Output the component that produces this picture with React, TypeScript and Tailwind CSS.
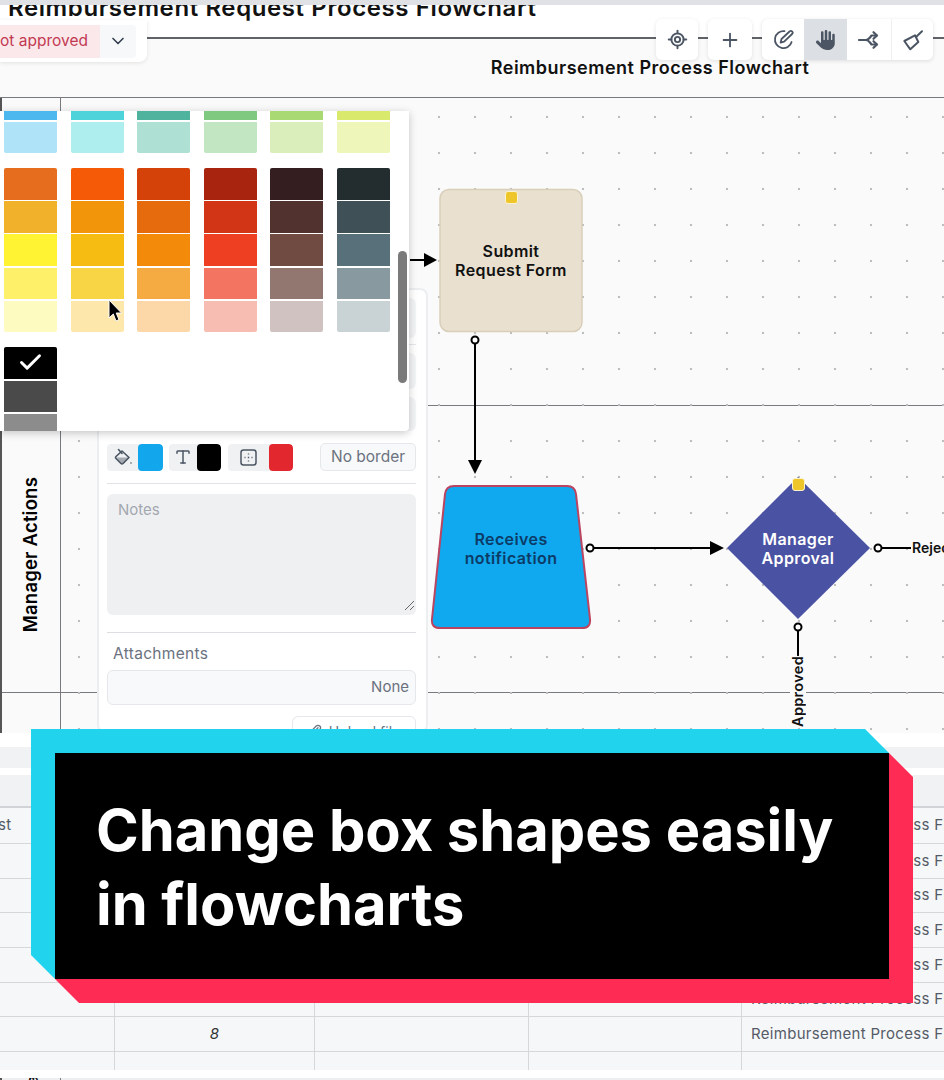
import { Check, ChevronDown, LocateFixed, Paperclip, Plus, Type } from "lucide-react";
import { FaHand } from "react-icons/fa6";

const paletteTop = [
  ["#4cb8ee", "#aee3f8"],
  ["#4fd3db", "#aeeeee"],
  ["#4fb39e", "#aee0d4"],
  ["#7fca80", "#c3e6c2"],
  ["#a9d973", "#d9eebb"],
  ["#d9e96c", "#eef6b9"],
];
const paletteMid = [
  ["#e56d1d", "#f2b12b", "#fff333", "#fff069", "#fefbc0"],
  ["#f55a06", "#f3950b", "#f7bc12", "#f8d545", "#fde7ab"],
  ["#d4420a", "#e66b0c", "#f48a0a", "#f6aa42", "#fcd8a8"],
  ["#a8240f", "#d23416", "#ef3f23", "#f37460", "#f7bdb3"],
  ["#341e1f", "#51322e", "#6f4b42", "#927670", "#d0c2c1"],
  ["#232c2f", "#3f5157", "#587079", "#88999f", "#c9d3d5"],
];

function Swatches({ colors, lastClip }: { colors: string[]; lastClip?: number }) {
  return (
    <div className="flex w-[53px] flex-col gap-[1.5px] overflow-hidden rounded-[2px]">
      {colors.map((c, i) => (
        <div key={c} style={{ backgroundColor: c, height: i === colors.length - 1 && lastClip ? lastClip : 31.7 }} />
      ))}
    </div>
  );
}

function Toolbar() {
  const btn = "flex h-[41px] w-[42px] items-center justify-center text-[#4b5563]";
  return (
    <div className="absolute left-[656px] top-[19px] flex gap-[10px]">
      <div className={`${btn} rounded-[6px] bg-white shadow-[0_1px_4px_rgba(0,0,0,0.1)]`}>
        <LocateFixed size={21} strokeWidth={2.2} />
      </div>
      <div className={`${btn} w-[44px] rounded-[6px] bg-white shadow-[0_1px_4px_rgba(0,0,0,0.1)]`}>
        <Plus size={22} strokeWidth={2} />
      </div>
      <div className="flex overflow-hidden rounded-[6px] bg-white shadow-[0_1px_4px_rgba(0,0,0,0.12)]">
        <div className={btn}>
          <svg width="21" height="21" viewBox="0 0 21 21" fill="none" stroke="currentColor" strokeWidth="1.8" strokeLinecap="round" strokeLinejoin="round">
            <path d="M11.5 2.2A8.5 8.5 0 1 0 18.6 13" />
            <path d="M7.6 13.6l.9-3.6 8-7.5a1.8 1.8 0 0 1 2.6 2.5l-8 7.6z" />
          </svg>
        </div>
        <div className={`${btn} w-[43px] bg-[#dcdfe3]`}>
          <FaHand size={20} />
        </div>
        <div className={btn}>
          <svg width="22" height="22" viewBox="0 0 22 22" fill="none" stroke="currentColor" strokeWidth="2.2" strokeLinecap="round" strokeLinejoin="round">
            <path d="M2 11H9Q11 11 13 8.5L14.5 6.5H19.5" />
            <path d="M9 11Q11 11 13 13.5L14.5 15.5H19.5" />
            <path d="M16.5 3.2L20 6.5L16.5 9.8" />
            <path d="M16.5 12.2L20 15.5L16.5 18.8" />
          </svg>
        </div>
        <div className={`${btn} ml-[2px] border-l border-[#eef0f2]`}>
          <svg width="22" height="22" viewBox="0 0 22 22" fill="none" stroke="currentColor" strokeWidth="2" strokeLinecap="round" strokeLinejoin="round">
            <path d="M14 8L20 2.3" />
            <path d="M2.3 12L13 6.3L16.3 13L8.3 20.3Z" />
          </svg>
        </div>
      </div>
    </div>
  );
}

function Lane({ height, label }: { height: string; label?: string }) {
  return (
    <div className={`flex ${height} border-b border-[#777b80]`}>
      <div className="flex w-[59px] shrink-0 items-center justify-center border-r border-[#777b80]">
        {label && (
          <span className="mt-[12px] rotate-180 text-[18.5px] font-semibold tracking-[0.2px] text-black [writing-mode:vertical-rl]">{label}</span>
        )}
      </div>
      <div className="flex-1" />
    </div>
  );
}

function Connectors() {
  return (
    <svg className="pointer-events-none absolute left-0 top-0" width="944" height="733" fill="none">
      <rect x="440" y="189.5" width="142" height="142" rx="9" fill="#e9e0d0" stroke="#d9cfb9" strokeWidth="1.5" />
      <path d="M454 486H567Q575 486 576 494L590 619Q591 628 582 628H440Q431 628 432 619L445 494Q446 486 454 486Z" fill="#10a8ee" stroke="#bb4460" strokeWidth="2" />
      <polygon points="798,477 870,548 798,619 727,548" fill="#4a52a3" />
      <g stroke="#000" strokeWidth="2">
        <path d="M410 260H425" />
        <path d="M475 344V461" />
        <path d="M594 548H712" />
        <path d="M882 548H911" />
        <path d="M798 631V656" />
      </g>
      <g fill="#000">
        <path d="M424 253L437 260L424 267Z" />
        <path d="M468 460L482 460L475 474Z" />
        <path d="M710 541L724 548L710 555Z" />
      </g>
      <g stroke="#000" strokeWidth="2" fill="#fff">
        <circle cx="475" cy="340" r="3.5" />
        <circle cx="590" cy="548" r="3.5" />
        <circle cx="878" cy="548" r="3.5" />
        <circle cx="798" cy="627" r="3.5" />
      </g>
    </svg>
  );
}

function Badge({ className }: { className: string }) {
  return <div className={`absolute h-[13px] w-[13px] rounded-[3px] border border-[#fbf3cf] bg-[#eec62a] ${className}`} />;
}

function Panel() {
  return (
    <div className="absolute left-[97px] top-[288px] flex h-[445px] w-[331px] flex-col rounded-[8px] border-2 border-[#eceef0] bg-white pl-[8px] pr-[10px] pt-[8px]">
      <div className="h-[40px] shrink-0 rounded-[6px] bg-[#f3f4f6]" />
      <div className="mt-[6px] border-t border-[#e5e7eb]" />
      <div className="mt-[8px] h-[36px] shrink-0 rounded-[6px] bg-[#f3f4f6]" />
      <div className="mt-[8px] h-[34px] shrink-0 rounded-[6px] bg-[#f3f4f6]" />
      <div className="mt-[12px] flex h-[28px] shrink-0 items-center">
        <div className="flex h-[27px] w-[56px] items-center overflow-hidden rounded-[4px] bg-[#f0f1f3]">
          <div className="flex w-[31px] justify-center text-[#4b5563]">
            <svg width="18" height="18" viewBox="0 0 18 18" fill="none" stroke="currentColor" strokeWidth="1.6" strokeLinejoin="round" strokeLinecap="round">
              <path d="M8 3L15 9.5L9 15.5Q8 16.5 7 15.5L2 10.5Q1 9.5 2 8.5Z" />
              <path d="M2.5 9.5H14.6L9 15.5Q8 16.5 7 15.5Z" fill="currentColor" opacity="0.45" stroke="none" />
              <path d="M4.5 1.5L8 5.5" />
              <circle cx="17" cy="15" r="0.8" fill="currentColor" stroke="none" />
            </svg>
          </div>
          <div className="h-full w-[25px] rounded-[4px] bg-[#12a6ec]" />
        </div>
        <div className="ml-[6px] flex h-[27px] w-[52px] items-center overflow-hidden rounded-[4px] bg-[#f0f1f3]">
          <div className="flex w-[28px] justify-center text-[#4b5563]">
            <Type size={18} strokeWidth={2} />
          </div>
          <div className="h-full w-[24px] rounded-[4px] bg-black" />
        </div>
        <div className="ml-[7px] flex h-[27px] w-[65px] items-center overflow-hidden rounded-[4px] bg-[#f0f1f3]">
          <div className="flex w-[41px] justify-center text-[#4b5563]">
            <svg width="17" height="17" viewBox="0 0 17 17" fill="none" stroke="currentColor">
              <rect x="1" y="1" width="15" height="15" rx="2.5" strokeWidth="1.5" />
              <path d="M8.5 4.5v1M8.5 7.8v1.4M8.5 11.5v1M4.5 8.5h1M11.5 8.5h1" strokeWidth="1.4" />
            </svg>
          </div>
          <div className="h-full w-[24px] rounded-[4px] bg-[#e3272f]" />
        </div>
        <div className="ml-auto flex h-[28px] w-[96px] items-center justify-center rounded-[5px] border border-[#e5e7eb] bg-[#f8f9fa] text-[15.5px] text-[#6b7280]">
          No border
        </div>
      </div>
      <div className="mt-[12px] border-t border-[#e1e3e6]" />
      <div className="relative mt-[10px] h-[121px] shrink-0 rounded-[6px] bg-[#eff0f2] px-[11px] py-[5px] text-[15px] text-[#a3a8b0]">
        Notes
        <svg className="absolute bottom-[4px] right-[1px]" width="11" height="11" viewBox="0 0 11 11" stroke="#666" strokeWidth="1">
          <path d="M1 10L10 1M6 10L10 6" />
        </svg>
      </div>
      <div className="mt-[17px] border-t border-[#dcdee1]" />
      <div className="mt-[11px] pl-[6px] text-[15.5px] leading-[20px] tracking-[0.3px] text-[#6b7280]">Attachments</div>
      <div className="mt-[6px] flex h-[35px] shrink-0 items-center justify-end rounded-[6px] border border-[#e5e7eb] bg-[#f8f9fa] pr-[6px] text-[15px] text-[#6b7280]">
        None
      </div>
      <div className="mt-[11px] flex h-[30px] w-[124px] shrink-0 items-center justify-center gap-[6px] self-end rounded-[6px] border border-[#e5e7eb] text-[14px] text-[#6b7280]">
        <Paperclip size={15} /> Upload file
      </div>
    </div>
  );
}

function Palette() {
  return (
    <div className="absolute left-0 top-[111px] h-[320px] w-[409px] overflow-hidden rounded-br-[4px] bg-white pl-[4px] shadow-[0_2px_8px_rgba(0,0,0,0.22)]">
      <div className="flex gap-[13.6px]">
        {paletteTop.map((c) => (
          <div key={c[0]} className="flex w-[53px] flex-col gap-[2px] overflow-hidden rounded-b-[2px]">
            <div className="h-[9px]" style={{ backgroundColor: c[0] }} />
            <div className="h-[31px]" style={{ backgroundColor: c[1] }} />
          </div>
        ))}
      </div>
      <div className="mt-[15px] flex gap-[13.6px]">
        {paletteMid.map((c) => (
          <Swatches key={c[0]} colors={c} />
        ))}
      </div>
      <div className="relative mt-[15px]">
        <Swatches colors={["#000000", "#4a4a4a", "#8c8c8c"]} lastClip={18} />
        <Check size={27} strokeWidth={2.6} className="absolute left-[13px] top-[2px] text-white" />
      </div>
      <div className="absolute left-[398px] top-[140px] h-[132px] w-[9px] rounded-full bg-[#7a7a7a]" />
      <svg className="absolute left-[107px] top-[188px]" width="15" height="24" viewBox="0 0 15 24">
        <path d="M2 1V19L6.3 15L9 22L12 20.6L9.2 14H14.5Z" fill="#000" stroke="#fff" strokeWidth="1" />
      </svg>
    </div>
  );
}

function TableRow({ left, num, right, h = "h-[34.7px]" }: { left?: string; num?: string; right?: string; h?: string }) {
  return (
    <div className={`flex ${h} shrink-0 border-b border-[#d5d7db] text-[15px] tracking-[0.3px] text-[#555b66]`}>
      <div className="flex w-[115px] items-center overflow-hidden border-r border-[#d5d7db] whitespace-nowrap">
        <span className="-ml-[2px]">{left}</span>
      </div>
      <div className="flex w-[200px] items-center justify-center border-r border-[#d5d7db] italic text-[#333]">{num}</div>
      <div className="w-[214px] border-r border-[#d5d7db]" />
      <div className="w-[213px] border-r border-[#d5d7db]" />
      <div className="flex min-w-0 flex-1 items-center overflow-hidden whitespace-nowrap pl-[9px]">{right}</div>
    </div>
  );
}

function Caption() {
  return (
    <div className="absolute left-[31px] top-[729px] h-[274px] w-[882px]">
      <div className="absolute inset-0 bg-[#22d3ee] [clip-path:polygon(0_0,834px_0,858px_24px,24px_250px,0_226px)]" />
      <div className="absolute inset-0 bg-[#fe2c55] [clip-path:polygon(858px_24px,882px_48px,882px_274px,48px_274px,24px_250px)]" />
      <div className="absolute left-[24px] top-[24px] flex h-[226px] w-[834px] flex-col bg-black pl-[41px] pt-[40px] font-['Inter',sans-serif] text-[57.8px] font-bold leading-[74px] text-white">
        <span>Change box shapes easily</span>
        <span>in flowcharts</span>
      </div>
    </div>
  );
}

export default function App() {
  const label = "absolute text-center font-semibold leading-[19px] text-[16px] tracking-[0.4px]";
  return (
    <div className="relative h-[1080px] w-[944px] overflow-hidden bg-[#eeeff1] font-['Inter','Noto_Sans',sans-serif]">
      <div className="h-[5px] bg-[#dfe1e5]" />
      <div className="h-[32px] overflow-hidden bg-white pl-[8px]">
        <div className="-mt-[11px] whitespace-nowrap text-[24px] font-semibold leading-[28px] tracking-[0.6px] text-[#111]">
          Reimbursement Request Process Flowchart
        </div>
      </div>
      <div className="relative h-[696px] border-t-2 border-[#5f6368] bg-[#fafafa]">
        <div className="flex h-[59px] items-center justify-center border-b border-[#777b80] pb-[2px] pl-[356px] text-[18px] font-semibold tracking-[0.5px] text-[#111]">
          Reimbursement Process Flowchart
        </div>
        <div className="border-l-2 border-[#555]">
          <Lane height="h-[308px]" />
          <Lane height="h-[287px]" label="Manager Actions" />
          <Lane height="h-[40px] border-b-0" />
        </div>
        <div className="absolute bottom-0 left-[61px] right-0 top-[59px] bg-[radial-gradient(circle,#bdbdbd_1px,transparent_1.6px)] bg-[length:36px_36px] bg-[position:0_1px]" />
        <div className="absolute left-0 top-[-39px]">
          <Connectors />
        </div>
      </div>

      <Badge className="left-[505px] top-[191px]" />
      <div className={`${label} left-[440px] top-[242px] w-[142px] text-[#111]`}>
        Submit
        <br />
        Request Form
      </div>
      <div className={`${label} left-[440px] top-[530px] w-[142px] text-[#0c3b68]`}>
        Receives
        <br />
        notification
      </div>
      <Badge className="left-[792px] top-[478px]" />
      <div className={`${label} left-[740px] top-[530px] w-[116px] text-white`}>
        Manager
        <br />
        Approval
      </div>
      <div className="absolute left-[912px] top-[540px] bg-[#fafafa] text-[14px] font-semibold leading-[16px] text-[#111]">Rejected</div>
      <div className="absolute left-[790px] top-[656px] rotate-180 bg-[#fafafa] text-[14.5px] font-semibold leading-[16px] tracking-[0.3px] text-[#111] [writing-mode:vertical-rl]">Approved</div>

      <div className="absolute left-0 top-[20px] flex h-[42px] w-[147px] items-center rounded-br-[8px] bg-white pr-[11px] shadow-[0_1px_4px_rgba(0,0,0,0.1)]">
        <div className="flex h-[33px] w-[100px] items-center justify-end whitespace-nowrap bg-[#fbe8ea] pr-[12px] text-[15.5px] text-[#c23a52]">
          ot approved
        </div>
        <div className="flex h-[33px] flex-1 items-center justify-center rounded-r-[4px] bg-[#f7f8fa] text-[#374151]">
          <ChevronDown size={20} strokeWidth={2} />
        </div>
      </div>
      <Toolbar />
      <Panel />
      <Palette />

      <div className="absolute left-0 top-[733px] flex w-[944px] flex-col">
        <div className="h-[14px] bg-white" />
        <div className="h-[21px] bg-[#f1f2f4]" />
        <div className="h-[7px] bg-white" />
        <div className="h-[33px] border-b-2 border-[#d1d3d7] bg-[#f1f2f4]" />
        <div className="flex h-[262px] flex-col overflow-hidden bg-[#f6f7f9]">
          <TableRow left="st" right="Reimbursement Process Flowchart" h="h-[36px]" />
          <TableRow right="Reimbursement Process Flowchart" />
          <TableRow right="Reimbursement Process Flowchart" />
          <TableRow right="Reimbursement Process Flowchart" />
          <TableRow right="Reimbursement Process Flowchart" />
          <TableRow right="Reimbursement Process Flowchart" />
          <TableRow num="8" right="Reimbursement Process Flowchart" />
          <TableRow />
        </div>
        <div className="h-[8px] bg-white" />
        <div className="relative flex h-[10px] overflow-hidden border-l-2 border-[#555]">
          <div className="h-full w-[59px] border-r border-[#777b80]">
            <span className="ml-[22px] -mt-[3px] block rotate-180 text-[16.5px] font-semibold leading-[16px] text-black [writing-mode:vertical-rl]">a</span>
          </div>
        </div>
      </div>
      <Caption />
    </div>
  );
}
